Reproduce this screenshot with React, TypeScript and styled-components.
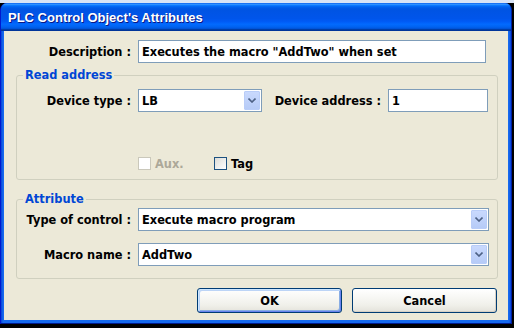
import React from "react";
import styled, { createGlobalStyle } from "styled-components";

const GlobalStyle = createGlobalStyle`
  html, body { margin: 0; padding: 0; }
  body {
    width: 514px;
    height: 328px;
    overflow: hidden;
    background: linear-gradient(to bottom, #d9e3f5 0, #d9e3f5 3px, #000 3px);
    font-family: "DejaVu Sans", Verdana, sans-serif;
    font-size: 11.4px;
    -webkit-font-smoothing: none;
  }
`;

const Window = styled.div`
  margin-top: 3px;
  width: 512px;
  height: 321px;
  box-sizing: border-box;
  background: #0b48d8;
  border-radius: 7px 7px 0 0;
  border-left: 1px solid #0019cf;
  border-right: 1px solid #001ea0;
  border-bottom: 1px solid #001a8c;
  display: flex;
  flex-direction: column;
  overflow: hidden;
`;

const TitleBar = styled.div`
  height: 28px;
  flex: none;
  display: flex;
  align-items: center;
  padding-left: 7px;
  background: linear-gradient(
    to bottom,
    #0058ee 0%,
    #3593ff 4%,
    #288eff 6%,
    #127dff 8%,
    #036ffc 10%,
    #0262ee 14%,
    #0057e5 20%,
    #0054e3 24%,
    #0055eb 56%,
    #005bf5 66%,
    #026afe 76%,
    #0062ef 86%,
    #0052d6 92%,
    #0040ab 94%,
    #003092 100%
  );
`;

const Title = styled.span`
  color: #fff;
  font-family: "Liberation Sans", Arial, sans-serif;
  font-weight: bold;
  font-size: 13px;
  text-shadow: 1px 1px 0 #0a1883;
  margin-top: 1px;
`;

const Frame = styled.div`
  flex: 1;
  padding: 0 3px 3px 3px;
  background: linear-gradient(to right, #0842d6, #166aee 2px, #166aee calc(100% - 2px), #0842d6);
  display: flex;
`;

const Content = styled.div`
  flex: 1;
  background: #ece9d8;
  display: flex;
  flex-direction: column;
  padding-top: 9px;
`;

const Row = styled.div<{ $mt?: number }>`
  display: flex;
  align-items: center;
  height: 23px;
  margin-top: ${(p) => p.$mt ?? 0}px;
`;

const Label = styled.label<{ $w: number; $ml?: number }>`
  width: ${(p) => p.$w}px;
  margin-left: ${(p) => p.$ml ?? 0}px;
  text-align: right;
  font-weight: bold;
  color: #000;
  white-space: nowrap;
  flex: none;
  margin-right: 7px;
`;

const TextBox = styled.div<{ $w: number }>`
  width: ${(p) => p.$w}px;
  height: 23px;
  box-sizing: border-box;
  border: 1px solid #7f9db9;
  background: #fff;
  display: flex;
  align-items: center;
  padding-left: 3px;
  font-weight: bold;
  color: #000;
  white-space: nowrap;
  overflow: hidden;
  flex: none;
`;

const Select = styled(TextBox)`
  padding-right: 1px;
  justify-content: space-between;
`;

const DropButton = styled.span`
  width: 16px;
  height: 19px;
  box-sizing: border-box;
  border: 1px solid #b9cdf8;
  border-radius: 1px;
  background: linear-gradient(to bottom, #c9d9fd, #b6cbf7);
  display: flex;
  align-items: center;
  justify-content: center;
  flex: none;
`;

const Chevron = () => (
  <svg width="8" height="5" viewBox="0 0 8 5">
    <path d="M0.5 0.5 L4 4 L7.5 0.5" fill="none" stroke="#4d6185" strokeWidth="1.6" />
  </svg>
);

const Group = styled.fieldset<{ $mt: number; $h: number }>`
  margin: ${(p) => p.$mt}px 10px 0 12px;
  padding: 0;
  border: 1px solid #d0d0bf;
  border-radius: 3px;
  height: ${(p) => p.$h}px;
  box-sizing: border-box;
  min-inline-size: 0;
`;

const Legend = styled.legend`
  margin-left: 6px;
  padding: 0 2px;
  line-height: 14px;
  font-weight: bold;
  color: #0046d5;
`;

const GroupBody = styled.div<{ $pt: number }>`
  display: flex;
  flex-direction: column;
  padding-top: ${(p) => p.$pt}px;
`;

const CheckRow = styled.div`
  display: flex;
  align-items: center;
  height: 13px;
  margin-top: 45px;
  padding-left: 121px;
`;

const CheckItem = styled.span<{ $disabled?: boolean; $w?: number }>`
  display: flex;
  align-items: center;
  gap: 4px;
  width: ${(p) => (p.$w ? `${p.$w}px` : "auto")};
  font-weight: bold;
  color: ${(p) => (p.$disabled ? "#aca899" : "#000")};
`;

const Box = styled.span<{ $disabled?: boolean }>`
  width: 13px;
  height: 13px;
  box-sizing: border-box;
  flex: none;
  border: 1px solid ${(p) => (p.$disabled ? "#cac8bb" : "#1c5180")};
  background: ${(p) =>
    p.$disabled ? "#fff" : "linear-gradient(135deg, #dcdcd7, #ffffff)"};
`;

const ButtonRow = styled.div`
  display: flex;
  justify-content: flex-end;
  gap: 10px;
  padding-right: 11px;
  margin-top: 9px;
`;

const Button = styled.button<{ $default?: boolean }>`
  width: 145px;
  height: 25px;
  box-sizing: border-box;
  border: 1px solid #003c74;
  border-radius: 3px;
  background: linear-gradient(to bottom, #ffffff, #f0f0ea 70%, #e3e2da);
  box-shadow: ${(p) =>
    p.$default
      ? "inset 1px 1px 0 #cee7ff, inset -1px -1px 0 #6982ee, inset 2px 2px 0 #bcd4f6, inset -2px -2px 0 #89ade4"
      : "inset -1px -1px 0 #d6d0c5"};
  font-family: "DejaVu Sans", Verdana, sans-serif;
  font-size: 11.4px;
  font-weight: bold;
  color: #000;
  padding: 0;
`;

const FieldSelect = ({ w, value }: { w: number; value: string }) => (
  <Select $w={w}>
    <span>{value}</span>
    <DropButton>
      <Chevron />
    </DropButton>
  </Select>
);

export default function App() {
  return (
    <>
      <GlobalStyle />
      <Window>
        <TitleBar>
          <Title>PLC Control Object's Attributes</Title>
        </TitleBar>
        <Frame>
          <Content>
            <Row>
              <Label $w={127}>Description :</Label>
              <TextBox $w={348}>Executes the macro "AddTwo" when set</TextBox>
            </Row>

            <Group $mt={5} $h={112}>
              <Legend>Read address</Legend>
              <GroupBody $pt={7}>
                <Row>
                  <Label $w={114}>Device type :</Label>
                  <FieldSelect w={124} value="LB" />
                  <Label $w={109} $ml={10}>Device address :</Label>
                  <TextBox $w={100}>1</TextBox>
                </Row>
                <CheckRow>
                  <CheckItem $disabled $w={76}>
                    <Box $disabled />
                    Aux.
                  </CheckItem>
                  <CheckItem>
                    <Box />
                    Tag
                  </CheckItem>
                </CheckRow>
              </GroupBody>
            </Group>

            <Group $mt={12} $h={87}>
              <Legend>Attribute</Legend>
              <GroupBody $pt={2}>
                <Row>
                  <Label $w={114}>Type of control :</Label>
                  <FieldSelect w={351} value="Execute macro program" />
                </Row>
                <Row $mt={12}>
                  <Label $w={114}>Macro name :</Label>
                  <FieldSelect w={351} value="AddTwo" />
                </Row>
              </GroupBody>
            </Group>

            <ButtonRow>
              <Button $default>OK</Button>
              <Button>Cancel</Button>
            </ButtonRow>
          </Content>
        </Frame>
      </Window>
    </>
  );
}
